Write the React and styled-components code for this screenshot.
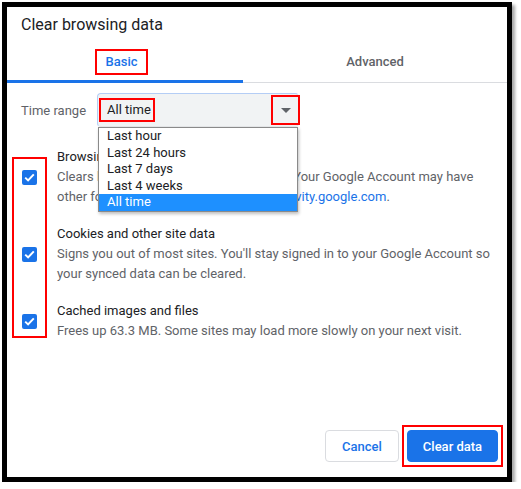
import React from "react";
import styled, { createGlobalStyle } from "styled-components";

const Global = createGlobalStyle`
  html, body { margin: 0; padding: 0; background: #fff; }
  body { font-family: Roboto, "Liberation Sans", Arial, sans-serif; overflow: hidden; }
  * { box-sizing: border-box; }
`;

const Frame = styled.div`
  margin: 2px 0 0 2px;
  width: 510px;
  height: 480px;
  border: 5px solid #000;
  background: #fff;
  box-shadow: 3px 3px 3px rgba(0, 0, 0, 0.35);
  display: flex;
  flex-direction: column;
`;

const Title = styled.div`
  padding: 8px 0 0 14px;
  font-size: 16px;
  line-height: 20px;
  color: #202124;
`;

const TabBar = styled.div`
  display: flex;
  height: 48px;
  border-bottom: 1px solid #dadce0;
`;

const Tab = styled.div`
  width: ${(p) => p.$width || "auto"};
  flex: ${(p) => (p.$width ? "none" : "1")};
  display: flex;
  justify-content: center;
  align-items: flex-start;
  padding: 14px ${(p) => p.$padRight || "0"} 0 0;
  font-size: 13px;
  font-weight: 500;
  color: ${(p) => (p.$active ? "#1a73e8" : "#5f6368")};
  border-bottom: 3px solid ${(p) => (p.$active ? "#1a73e8" : "transparent")};
  margin-bottom: -1px;
`;

const Marked = styled.span`
  display: inline-block;
  border: 2px solid #f00;
  padding: ${(p) => p.$pad || "3px 8px"};
  line-height: 16px;
  white-space: nowrap;
`;

const Plain = styled.span`
  display: inline-block;
  border: 2px solid transparent;
  padding: 3px 8px;
  line-height: 16px;
`;

const RangeRow = styled.div`
  display: flex;
  align-items: center;
  margin-top: 10px;
  padding-left: 14px;
  gap: 11px;
`;

const Label = styled.div`
  font-size: 13px;
  color: #5f6368;
`;

const SelectWrap = styled.div`
  position: relative;
  width: 202px;
  height: 34px;
`;

const SelectBox = styled.div`
  height: 100%;
  display: flex;
  align-items: center;
  justify-content: space-between;
  background: #f1f3f4;
  border: 1px solid #b4cdf5;
  border-right-color: #e6e8ea;
  border-bottom-color: #e6e8ea;
  border-radius: 4px;
  padding: 0 0 0 1px;
  font-size: 13px;
  color: #202124;
`;

const ArrowBox = styled.div`
  width: 29px;
  height: 30px;
  border: 2px solid #f00;
  display: flex;
  align-items: center;
  justify-content: center;
  margin-right: -2px;
`;

const Arrow = styled.div`
  width: 0;
  height: 0;
  border-left: 5px solid transparent;
  border-right: 5px solid transparent;
  border-top: 5px solid #5f6368;
  margin-top: 1px;
`;

const DropList = styled.div`
  position: absolute;
  top: 100%;
  left: 1px;
  width: 200px;
  background: #fff;
  border: 1px solid #8a8a8a;
  box-shadow: 1px 2px 3px rgba(0, 0, 0, 0.25);
  z-index: 5;
`;

const Option = styled.div`
  height: 16.6px;
  line-height: 16.6px;
  padding-left: 8px;
  font-size: 13px;
  color: ${(p) => (p.$selected ? "#fff" : "#202124")};
  background: ${(p) => (p.$selected ? "#1e90ff" : "transparent")};
`;

const Items = styled.div`
  position: relative;
  margin-top: 20px;
  display: flex;
  flex-direction: column;
  gap: 17px;
`;

const CheckMark = styled.div`
  position: absolute;
  left: 5px;
  top: 10px;
  width: 35px;
  height: 181px;
  border: 2px solid #f00;
  pointer-events: none;
`;

const Item = styled.div`
  display: flex;
  align-items: center;
  padding: 0 14px 0 15px;
  gap: 20px;
`;

const Box = styled.div`
  flex: none;
  width: 15px;
  height: 15px;
  border-radius: 2px;
  background: #1a73e8;
  display: flex;
  align-items: center;
  justify-content: center;
`;

const ItemText = styled.div`
  flex: 1;
  font-size: 13px;
  line-height: 20px;
`;

const ItemTitle = styled.div`
  color: #202124;
`;

const ItemDesc = styled.div`
  color: #5f6368;
`;

const Link = styled.span`
  color: #1a73e8;
`;

const Footer = styled.div`
  margin-top: auto;
  display: flex;
  justify-content: flex-end;
  align-items: center;
  gap: 3px;
  padding: 0 4px 10px 0;
`;

const Button = styled.button`
  height: 32px;
  padding: 0;
  white-space: nowrap;
  border-radius: 4px;
  font-family: inherit;
  font-size: 13px;
  font-weight: 500;
  border: 1px solid ${(p) => (p.$primary ? "#1a73e8" : "#dadce0")};
  background: ${(p) => (p.$primary ? "#1a73e8" : "#fff")};
  color: ${(p) => (p.$primary ? "#fff" : "#1a73e8")};
  width: ${(p) => p.$w};
`;

const ButtonMark = styled.div`
  border: 2px solid #f00;
  padding: 3px;
  display: flex;
`;

const Check = () => (
  <svg width="11" height="9" viewBox="0 0 11 9">
    <path d="M1.2 4.6 L4.1 7.4 L9.8 1.4" fill="none" stroke="#fff" strokeWidth="2" />
  </svg>
);

const items = [
  {
    title: "Browsing history",
    desc: (
      <>
        Clears history from all signed-in devices. Your Google Account may have other forms of browsing history at{" "}
        <Link>myactivity.google.com</Link>.
      </>
    ),
  },
  {
    title: "Cookies and other site data",
    desc: "Signs you out of most sites. You'll stay signed in to your Google Account so your synced data can be cleared.",
  },
  {
    title: "Cached images and files",
    desc: "Frees up 63.3 MB. Some sites may load more slowly on your next visit.",
  },
];

const options = ["Last hour", "Last 24 hours", "Last 7 days", "Last 4 weeks", "All time"];

export default function App() {
  return (
    <>
      <Global />
      <Frame>
        <Title>Clear browsing data</Title>
        <TabBar>
          <Tab $active $width="236px" $padRight="7px">
            <Marked>Basic</Marked>
          </Tab>
          <Tab>
            <Plain>Advanced</Plain>
          </Tab>
        </TabBar>
        <RangeRow>
          <Label>Time range</Label>
          <SelectWrap>
            <SelectBox>
              <Marked $pad="2px 2px 2px 6px">All time</Marked>
              <ArrowBox>
                <Arrow />
              </ArrowBox>
            </SelectBox>
            <DropList>
              {options.map((o) => (
                <Option key={o} $selected={o === "All time"}>
                  {o}
                </Option>
              ))}
            </DropList>
          </SelectWrap>
        </RangeRow>
        <Items>
          <CheckMark />
          {items.map((it) => (
            <Item key={it.title}>
              <Box>
                <Check />
              </Box>
              <ItemText>
                <ItemTitle>{it.title}</ItemTitle>
                <ItemDesc>{it.desc}</ItemDesc>
              </ItemText>
            </Item>
          ))}
        </Items>
        <Footer>
          <Button $w="74px">Cancel</Button>
          <ButtonMark>
            <Button $primary $w="91px">
              Clear data
            </Button>
          </ButtonMark>
        </Footer>
      </Frame>
    </>
  );
}
